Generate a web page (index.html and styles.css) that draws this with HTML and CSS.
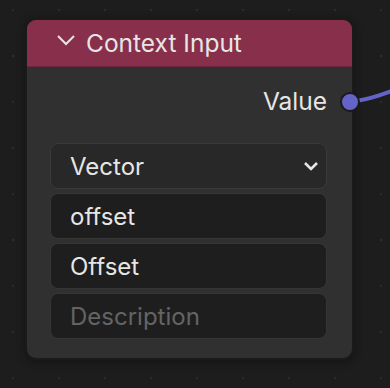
FILE: index.html
```html
<!DOCTYPE html>
<html lang="en">
<head>
    <meta charset="UTF-8">
    <title>Context Input</title>
    <link rel="stylesheet" href="styles.css">
</head>
<body>
    <div class="canvas">
        <svg class="wire" width="60" height="40" viewBox="0 0 60 40">
            <path d="M 26 31 C 36 30, 46 27, 62 21" stroke="#6464c8" stroke-width="4" fill="none"/>
        </svg>
        <div class="node">
            <div class="node-header">
                <svg class="chevron" width="20" height="12" viewBox="0 0 20 12">
                    <path d="M 2 2 L 10 10 L 18 2" stroke="#e6e6e6" stroke-width="2" fill="none"/>
                </svg>
                <span>Context Input</span>
            </div>
            <div class="node-body">
                <div class="output-row">
                    <span>Value</span>
                    <span class="socket"></span>
                </div>
                <div class="fields">
                    <div class="field select">
                        <span>Vector</span>
                        <svg width="16" height="11" viewBox="0 0 16 11">
                            <path d="M 2 2 L 8 8 L 14 2" stroke="#e6e6e6" stroke-width="2.6" fill="none"/>
                        </svg>
                    </div>
                    <div class="field">offset</div>
                    <div class="field">Offset</div>
                    <div class="field placeholder">Description</div>
                </div>
            </div>
        </div>
    </div>
</body>
</html>
```

FILE: styles.css
```css
body {
    margin: 0;
    background-color: #1d1d1d;
    font-family: Inter, "Noto Sans", sans-serif;
    color: #e6e6e6;
}
.canvas {
    position: relative;
    width: 390px;
    height: 388px;
    overflow: hidden;
    background-image: radial-gradient(circle, #2c2c2c 1px, transparent 1.5px);
    background-size: 46px 46px;
    background-position: -10px -13px;
    padding: 20px 0 0 27px;
    box-sizing: border-box;
}
.wire {
    position: absolute;
    left: 330px;
    top: 70px;
}
.node {
    width: 325px;
    height: 338px;
    background-color: #303030;
    border-radius: 9px;
    box-shadow: 0 0 0 2px #1a1a1a, 0 2px 6px 3px #161616;
    display: flex;
    flex-direction: column;
}
.node-header {
    height: 46px;
    background-color: #88304b;
    border-radius: 9px 9px 0 0;
    border-bottom: 1px solid #6f2640;
    display: flex;
    align-items: center;
    gap: 10px;
    padding-left: 29px;
    font-size: 24.5px;
}
.chevron {
    margin-top: -6px;
}
.node-body {
    flex: 1;
    display: flex;
    flex-direction: column;
    padding: 16px 25px 0 23px;
}
.output-row {
    height: 36px;
    display: flex;
    align-items: center;
    justify-content: flex-end;
    font-size: 24.5px;
    position: relative;
}
.socket {
    position: absolute;
    right: -33px;
    top: 9px;
    width: 16px;
    height: 16px;
    border-radius: 50%;
    background-color: #6464c8;
    border: 2px solid #1a1a1a;
}
.fields {
    margin-top: 24px;
    display: flex;
    flex-direction: column;
    gap: 4px;
}
.field {
    height: 44px;
    border: 1px solid #363636;
    border-radius: 8px;
    background-color: #1e1e1e;
    display: flex;
    align-items: center;
    padding: 0 7px 0 19px;
    font-size: 24px;
}
.field.select {
    background-color: #282828;
    border-color: #3a3a3a;
    justify-content: space-between;
}
.field.placeholder {
    color: #646464;
}
```
